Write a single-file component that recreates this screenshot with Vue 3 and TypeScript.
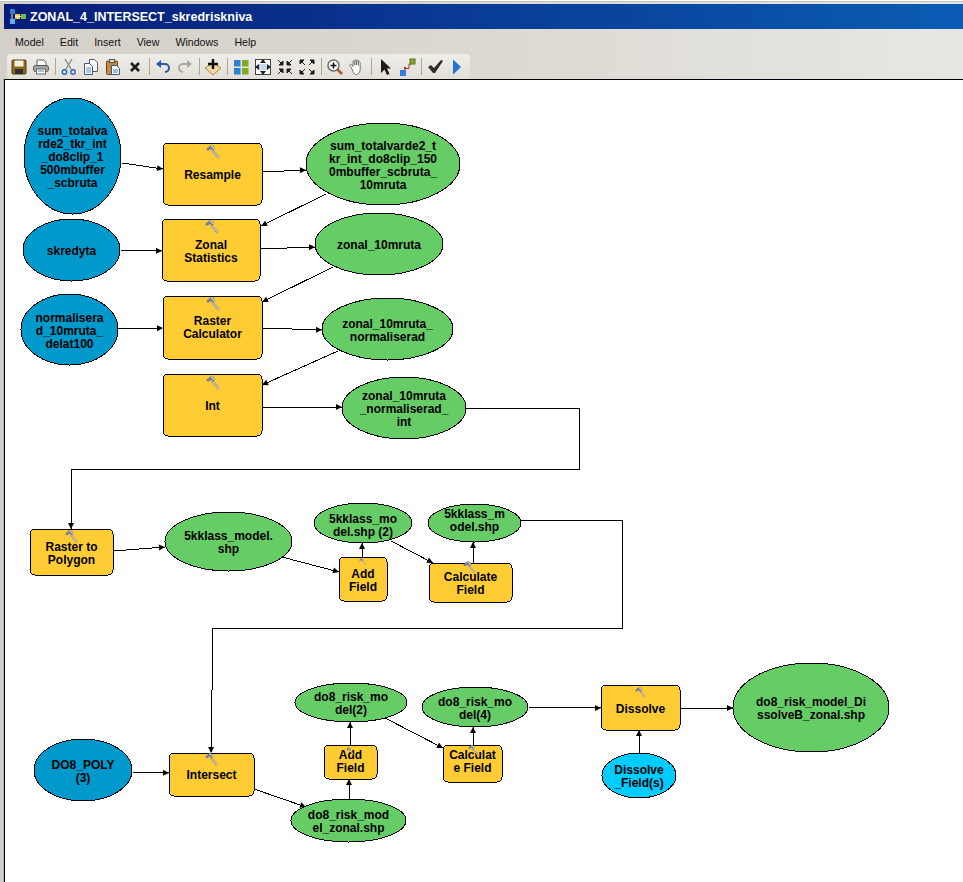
<script setup lang="ts">
type Node = {
  kind: 'ellipse' | 'tool'
  x: number
  y: number
  w: number
  h: number
  fill?: string
  lines: string[]
  dy?: number
  // hammer: x, y, size
  ham?: [number, number, number]
}

const BLUE = '#0099cc'
const GREEN = '#66cc66'
const CYAN = '#00ccff'

const nodes: Node[] = [
  { kind: 'ellipse', x: 24, y: 98, w: 97, h: 116, fill: BLUE, lines: ['sum_totalva', 'rde2_tkr_int', '_do8clip_1', '500mbuffer', '_scbruta'] },
  { kind: 'tool', x: 163, y: 143, w: 99, h: 62, lines: ['Resample'], ham: [206, 145, 14] },
  { kind: 'ellipse', x: 306, y: 123, w: 154, h: 82, fill: GREEN, lines: ['sum_totalvarde2_t', 'kr_int_do8clip_150', '0mbuffer_scbruta_', '10mruta'] },
  { kind: 'ellipse', x: 23, y: 219, w: 97, h: 62, fill: BLUE, lines: ['skredyta'] },
  { kind: 'tool', x: 162, y: 219, w: 98, h: 62, lines: ['Zonal', 'Statistics'], ham: [205, 220, 14] },
  { kind: 'ellipse', x: 315, y: 213, w: 128, h: 62, fill: GREEN, lines: ['zonal_10mruta'] },
  { kind: 'ellipse', x: 21, y: 294, w: 97, h: 71, fill: BLUE, lines: ['normalisera', 'd_10mruta_', 'delat100'] },
  { kind: 'tool', x: 163, y: 296, w: 99, h: 63, lines: ['Raster', 'Calculator'], dy: -1, ham: [206, 297, 14] },
  { kind: 'ellipse', x: 322, y: 298, w: 131, h: 62, fill: GREEN, lines: ['zonal_10mruta_', 'normaliserad'] },
  { kind: 'tool', x: 163, y: 374, w: 99, h: 62, lines: ['Int'], ham: [206, 376, 14] },
  { kind: 'ellipse', x: 342, y: 377, w: 124, h: 62, fill: GREEN, lines: ['zonal_10mruta', '_normaliserad_', 'int'] },
  { kind: 'tool', x: 30, y: 529, w: 83, h: 46, lines: ['Raster to', 'Polygon'], ham: [65, 530, 13] },
  { kind: 'ellipse', x: 165, y: 512, w: 127, h: 59, fill: GREEN, lines: ['5kklass_model.', 'shp'] },
  { kind: 'ellipse', x: 314, y: 503, w: 98, h: 40, fill: GREEN, lines: ['5kklass_mo', 'del.shp (2)'], dy: 1 },
  { kind: 'ellipse', x: 428, y: 504, w: 93, h: 38, fill: GREEN, lines: ['5kklass_m', 'odel.shp'], dy: -4 },
  { kind: 'tool', x: 339, y: 557, w: 48, h: 44, lines: ['Add', 'Field'], ham: [359, 558, 7] },
  { kind: 'tool', x: 429, y: 563, w: 83, h: 39, lines: ['Calculate', 'Field'], ham: [463, 561, 13] },
  { kind: 'ellipse', x: 34, y: 739, w: 98, h: 62, fill: BLUE, lines: ['DO8_POLY', '(3)'] },
  { kind: 'tool', x: 169, y: 753, w: 85, h: 43, lines: ['Intersect'], dy: -1, ham: [205, 753, 13] },
  { kind: 'ellipse', x: 295, y: 683, w: 112, h: 39, fill: GREEN, lines: ['do8_risk_mo', 'del(2)'] },
  { kind: 'tool', x: 324, y: 745, w: 53, h: 34, lines: ['Add', 'Field'], dy: -1.5, ham: [346, 747, 8] },
  { kind: 'ellipse', x: 291, y: 799, w: 115, h: 43, fill: GREEN, lines: ['do8_risk_mod', 'el_zonal.shp'] },
  { kind: 'ellipse', x: 422, y: 687, w: 106, h: 40, fill: GREEN, lines: ['do8_risk_mo', 'del(4)'] },
  { kind: 'tool', x: 443, y: 745, w: 59, h: 37, lines: ['Calculat', 'e Field'], dy: -3, ham: [468, 745, 10] },
  { kind: 'tool', x: 601, y: 685, w: 79, h: 45, lines: ['Dissolve'], ham: [635, 687, 11] },
  { kind: 'ellipse', x: 602, y: 753, w: 74, h: 45, fill: CYAN, lines: ['Dissolve', '_Field(s)'] },
  { kind: 'ellipse', x: 733, y: 663, w: 156, h: 89, fill: GREEN, lines: ['do8_risk_model_Di', 'ssolveB_zonal.shp'] },
]

// page coordinates, the last point is where the arrowhead sits
const edges: number[][] = [
  [122, 163, 163, 169],
  [262, 172, 306, 170],
  [326, 194, 261, 226],
  [120, 250, 162, 251],
  [260, 249, 315, 247],
  [333, 267, 262, 302],
  [118, 329, 163, 328],
  [262, 328, 322, 330],
  [338, 351, 262, 385],
  [262, 407, 342, 407],
  [466, 408, 579, 408, 579, 469, 71, 469, 71, 529],
  [113, 551, 165, 547],
  [282, 557, 339, 572],
  [362, 557, 362, 543],
  [391, 541, 433, 563],
  [473, 563, 473, 542],
  [521, 520, 622, 520, 622, 628, 212, 628, 212, 690, 211, 753],
  [132, 772, 169, 773],
  [254, 789, 306, 807],
  [349, 799, 349, 779],
  [350, 745, 350, 722],
  [385, 718, 443, 748],
  [473, 745, 473, 727],
  [528, 707, 601, 708],
  [680, 708, 733, 708],
  [639, 753, 639, 730],
]

function linePoints(e: number[]) {
  const out: string[] = []
  for (let i = 0; i < e.length; i += 2) out.push(e[i] + ',' + e[i + 1])
  return out.join(' ')
}

function headPoints(e: number[]) {
  const n = e.length
  const tx = e[n - 2]
  const ty = e[n - 1]
  const dx = tx - e[n - 4]
  const dy = ty - e[n - 3]
  const len = Math.hypot(dx, dy)
  const ux = dx / len
  const uy = dy / len
  const bx = tx - ux * 6
  const by = ty - uy * 6
  const hw = 3
  return [
    `${tx},${ty}`,
    `${bx - uy * hw},${by + ux * hw}`,
    `${bx + uy * hw},${by - ux * hw}`,
  ].join(' ')
}

function textY(n: Node, i: number) {
  const mid = n.y + n.h / 2 + 1 + (n.dy ?? 0)
  return mid + (i - (n.lines.length - 1) / 2) * 13
}

const menus = ['Model', 'Edit', 'Insert', 'View', 'Windows', 'Help']

const tools: string[] = [
  'save', 'print', '|', 'cut', 'copy', 'paste', 'del', '|', 'undo', 'redo', '|', 'add', '|',
  'grid', 'extent', 'in', 'out', '|', 'zoom', 'hand', '|', 'arrow', 'link', '|', 'check', 'play',
]
</script>

<template>
  <div class="window">
    <div class="titlebar">
      <svg class="app-icon" width="17" height="16" viewBox="0 0 17 16">
        <rect x="1" y="0" width="5" height="5" fill="#2f7fd8" />
        <rect x="1" y="10" width="5" height="5" fill="#5fb0f0" />
        <rect x="6" y="5" width="5" height="5" fill="#f0d040" />
        <rect x="12" y="5" width="5" height="5" fill="#70c040" />
        <path d="M3 5v5M6 7.5h6" stroke="#dfe8f5" fill="none" />
      </svg>
      <span class="title">ZONAL_4_INTERSECT_skredriskniva</span>
    </div>
    <div class="menubar">
      <span v-for="m in menus" :key="m">{{ m }}</span>
    </div>
    <div class="toolrow">
      <div class="toolbar">
        <template v-for="(t, i) in tools" :key="i">
          <span v-if="t === '|'" class="sep"></span>
          <span v-else class="btn">
            <svg width="18" height="18" viewBox="0 0 18 18">
              <g v-if="t === 'save'">
                <rect x="2" y="2" width="14" height="14" rx="1" fill="#8a6a20" stroke="#4a3a10" />
                <rect x="4.500" y="2.500" width="9" height="6" fill="#f4f0e0" />
                <rect x="5" y="11" width="8" height="5" fill="#30302a" />
              </g>
              <g v-else-if="t === 'print'">
                <path d="M5 2h7l2 2v4H5z" fill="#fff" stroke="#666" />
                <rect x="1.500" y="7.500" width="15" height="6" rx="2" fill="#a8a69c" stroke="#55554e" />
                <rect x="4.500" y="11" width="9" height="5" fill="#fff" stroke="#666" />
                <path d="M6 13h6" stroke="#3a8ad0" />
              </g>
              <g v-else-if="t === 'cut'" fill="none">
                <path d="M5 1l6 10M12 1L6 11" stroke="#8a8a8a" stroke-width="1.400" />
                <circle cx="4.500" cy="14" r="2.200" stroke="#2a66b8" stroke-width="1.400" />
                <circle cx="13" cy="14" r="2.200" stroke="#2a66b8" stroke-width="1.400" />
              </g>
              <g v-else-if="t === 'copy'">
                <path d="M7.500 1.500h5l3 3v9h-8z" fill="#fff" stroke="#5a5a5a" />
                <path d="M2.500 5.500h5l3 3v8h-8z" fill="#fff" stroke="#345a8a" />
                <path d="M4 10h5M4 12h5M4 14h5" stroke="#5a8ac0" />
              </g>
              <g v-else-if="t === 'paste'">
                <rect x="2.500" y="3" width="11" height="13.500" rx="1" fill="#c88a3a" stroke="#6a4a18" />
                <rect x="5.500" y="1.500" width="5" height="3" fill="#ddd" stroke="#555" />
                <path d="M7.500 7.500h5l3 3v6h-8z" fill="#fff" stroke="#345a8a" />
                <path d="M9 12h5M9 14h5" stroke="#3a7ac0" />
              </g>
              <path v-else-if="t === 'del'" d="M5 5l8 8M13 5l-8 8" stroke="#1c1c1c" stroke-width="2.600" />
              <g v-else-if="t === 'undo'" fill="none">
                <path d="M6 6h5a4 4 0 0 1 4 4v0a4 4 0 0 1-4 4" stroke="#2a58a8" stroke-width="2" />
                <path d="M7 2v8L2 6z" fill="#2a58a8" />
              </g>
              <g v-else-if="t === 'redo'" fill="none">
                <path d="M12 6H7a4 4 0 0 0-4 4v0a4 4 0 0 0 4 4" stroke="#a8a8a0" stroke-width="2" />
                <path d="M11 2v8l5-4z" fill="#a8a8a0" />
              </g>
              <g v-else-if="t === 'add'">
                <path d="M1 10l8-5 8 5-8 7z" fill="#f2d9a0" stroke="#a88848" />
                <path d="M9 1v10M4 6h10" stroke="#111" stroke-width="2.400" />
              </g>
              <g v-else-if="t === 'grid'">
                <rect x="2" y="2" width="6.500" height="6.500" fill="#2f7fd8" />
                <rect x="10" y="2" width="6.500" height="6.500" fill="#84a828" />
                <rect x="2" y="10" width="6.500" height="6.500" fill="#2f7fd8" />
                <rect x="10" y="10" width="6.500" height="6.500" fill="#84a828" />
              </g>
              <g v-else-if="t === 'extent'">
                <rect x="1.500" y="1.500" width="15" height="15" fill="#fff" stroke="#444" />
                <rect x="5" y="6" width="8" height="6" fill="#c8d8ec" />
                <path d="M9 1l3 4H6zM9 17l3-4H6zM1 9l4-3v6zM17 9l-4-3v6z" fill="#222" />
              </g>
              <path
                v-else-if="t === 'in'"
                d="M7 7H3l4-4zM2 2l3 3M11 7h4l-4-4zM16 2l-3 3M7 11H3l4 4zM2 16l3-3M11 11h4l-4 4zM16 16l-3-3"
                fill="#1c1c1c"
                stroke="#1c1c1c"
              />
              <path
                v-else-if="t === 'out'"
                d="M2 2h4L2 6zM3 3l4 4M16 2h-4l4 4zM15 3l-4 4M2 16h4l-4-4zM3 15l4-4M16 16h-4l4-4zM15 15l-4-4"
                fill="#1c1c1c"
                stroke="#1c1c1c"
              />
              <g v-else-if="t === 'zoom'">
                <path d="M11 11l5 5" stroke="#a85a28" stroke-width="2.600" />
                <circle cx="7.500" cy="7.500" r="5.500" fill="#fff" stroke="#666" stroke-width="1.400" />
                <path d="M7.500 4.500v6M4.500 7.500h6" stroke="#111" stroke-width="1.600" />
              </g>
              <path
                v-else-if="t === 'hand'"
                d="M4 11L2 7.500c-.6-1.400 1-2 1.800-.8L5 8.500V3.500c0-1.200 1.800-1.200 1.800 0V7V2.500c0-1.200 1.900-1.200 1.900 0V7V3c0-1.200 1.800-1.200 1.800 0v4.500V4.500c0-1.200 1.700-1.200 1.700 0V11c0 3-1.500 5.500-4.200 5.500H7.500C5.800 16.500 5 13.500 4 11z"
                fill="#fff"
                stroke="#77776c"
              />
              <path v-else-if="t === 'arrow'" d="M5 1v14l3.500-3.500 2.500 5.500 2.500-1-2.500-5.500H15z" fill="#1c1c1c" />
              <g v-else-if="t === 'link'">
                <path d="M7 14v-3.500h4V6h3" fill="none" stroke="#884438" />
                <rect x="12" y="1" width="5" height="5" fill="#84a828" stroke="#5a7418" />
                <rect x="2" y="12" width="6" height="6" fill="#2f7fd8" />
                <rect x="6" y="9" width="2" height="2" fill="#d02020" />
              </g>
              <path v-else-if="t === 'check'" d="M2 9l3-2 3 3 7-8 2 1-8 12h-2z" fill="#2e2e2e" />
              <path v-else-if="t === 'play'" d="M5 1.500v15L13 9z" fill="#1f74d4" />
            </svg>
          </span>
        </template>
      </div>
    </div>
    <div class="canvas">
      <svg class="diagram" width="958" height="802" viewBox="5 80 958 802">
        <defs>
          <symbol id="hammer" viewBox="0 0 14 14">
            <path d="M6 5l7 8" stroke="#8a8a8a" stroke-width="2.200" />
            <path d="M6 5l7 8" stroke="#f0f0f0" stroke-width="0.900" />
            <path d="M0 4l5-4 3 1 1 3-2 2-2-2-3 2z" fill="#7c808a" />
            <path d="M5 1L7 2 8 4" fill="none" stroke="#ececec" />
          </symbol>
        </defs>

        <template v-for="(e, i) in edges" :key="i">
          <polyline class="edge" :points="linePoints(e)" />
          <polygon class="head" :points="headPoints(e)" />
        </template>

        <g v-for="(n, i) in nodes" :key="'n' + i">
          <ellipse
            v-if="n.kind === 'ellipse'"
            class="shape"
            :cx="n.x + n.w / 2"
            :cy="n.y + n.h / 2"
            :rx="n.w / 2"
            :ry="n.h / 2"
            :fill="n.fill"
          />
          <rect
            v-else
            class="shape"
            :x="n.x"
            :y="n.y"
            :width="n.w"
            :height="n.h"
            rx="5"
            fill="#ffcc33"
          />
          <text
            v-for="(l, j) in n.lines"
            :key="j"
            class="label"
            :x="n.x + n.w / 2"
            :y="textY(n, j)"
          >{{ l }}</text>
          <use
            v-if="n.ham"
            href="#hammer"
            :x="n.ham[0]"
            :y="n.ham[1]"
            :width="n.ham[2]"
            :height="n.ham[2]"
          />
        </g>
      </svg>
    </div>
  </div>
</template>

<style>
html, body { margin: 0; background: #fff; overflow: hidden; }
</style>

<style scoped>
.window {
  width: 963px;
  height: 882px;
  display: flex;
  flex-direction: column;
  box-sizing: border-box;
  background: linear-gradient(90deg, #d4d0c8 0%, #dcd9d2 50%, #e7e6e2 100%);
  border-top: 1px solid #fff;
  box-shadow: inset 0 1px 0 #c0c0c0;
  font-family: "Liberation Sans", Arial, sans-serif;
  overflow: hidden;
}

.titlebar {
  margin: 3px 0 0 4px;
  height: 25px;
  display: flex;
  align-items: center;
  background: linear-gradient(90deg, #081c78 0%, #0a5cb4 100%);
  color: #fff;
  flex-shrink: 0;
}
.app-icon { margin-left: 5px; }
.title {
  margin-left: 4px;
  font-size: 12.5px;
  font-weight: 700;
}

.menubar {
  display: flex;
  gap: 16px;
  height: 25px;
  align-items: center;
  padding-left: 15px;
  font-size: 10.6px;
  color: #111;
  flex-shrink: 0;
}

.toolrow {
  display: flex;
  height: 25px;
  padding-left: 7px;
  flex-shrink: 0;
}
.toolbar {
  display: flex;
  align-items: center;
  width: 463px;
  box-sizing: border-box;
  padding-left: 1px;
  border-radius: 3px;
  background: linear-gradient(180deg, #efede8 0%, #e2dfd8 100%);
}
.btn {
  width: 22px;
  height: 22px;
  display: flex;
  align-items: center;
  justify-content: center;
  flex-shrink: 0;
}
.sep {
  width: 1px;
  height: 17px;
  margin: 0 2px 0 3px;
  background: #a8a59c;
  flex-shrink: 0;
}

.canvas {
  flex: 1;
  margin-left: 4px;
  background: #fff;
  border-top: 1px solid #000;
  border-left: 1px solid #000;
  box-shadow: -1px 0 0 #b4b4b4;
  position: relative;
  overflow: hidden;
}
.diagram { display: block; }

.edge {
  fill: none;
  stroke: #000;
  stroke-width: 1;
  shape-rendering: crispEdges;
}
.head { fill: #000; }
.shape {
  stroke: #000;
  stroke-width: 1;
  shape-rendering: crispEdges;
}
.label {
  font-family: "Liberation Sans", Arial, sans-serif;
  font-size: 12px;
  font-weight: 700;
  fill: #000;
  text-anchor: middle;
  dominant-baseline: central;
}
</style>
